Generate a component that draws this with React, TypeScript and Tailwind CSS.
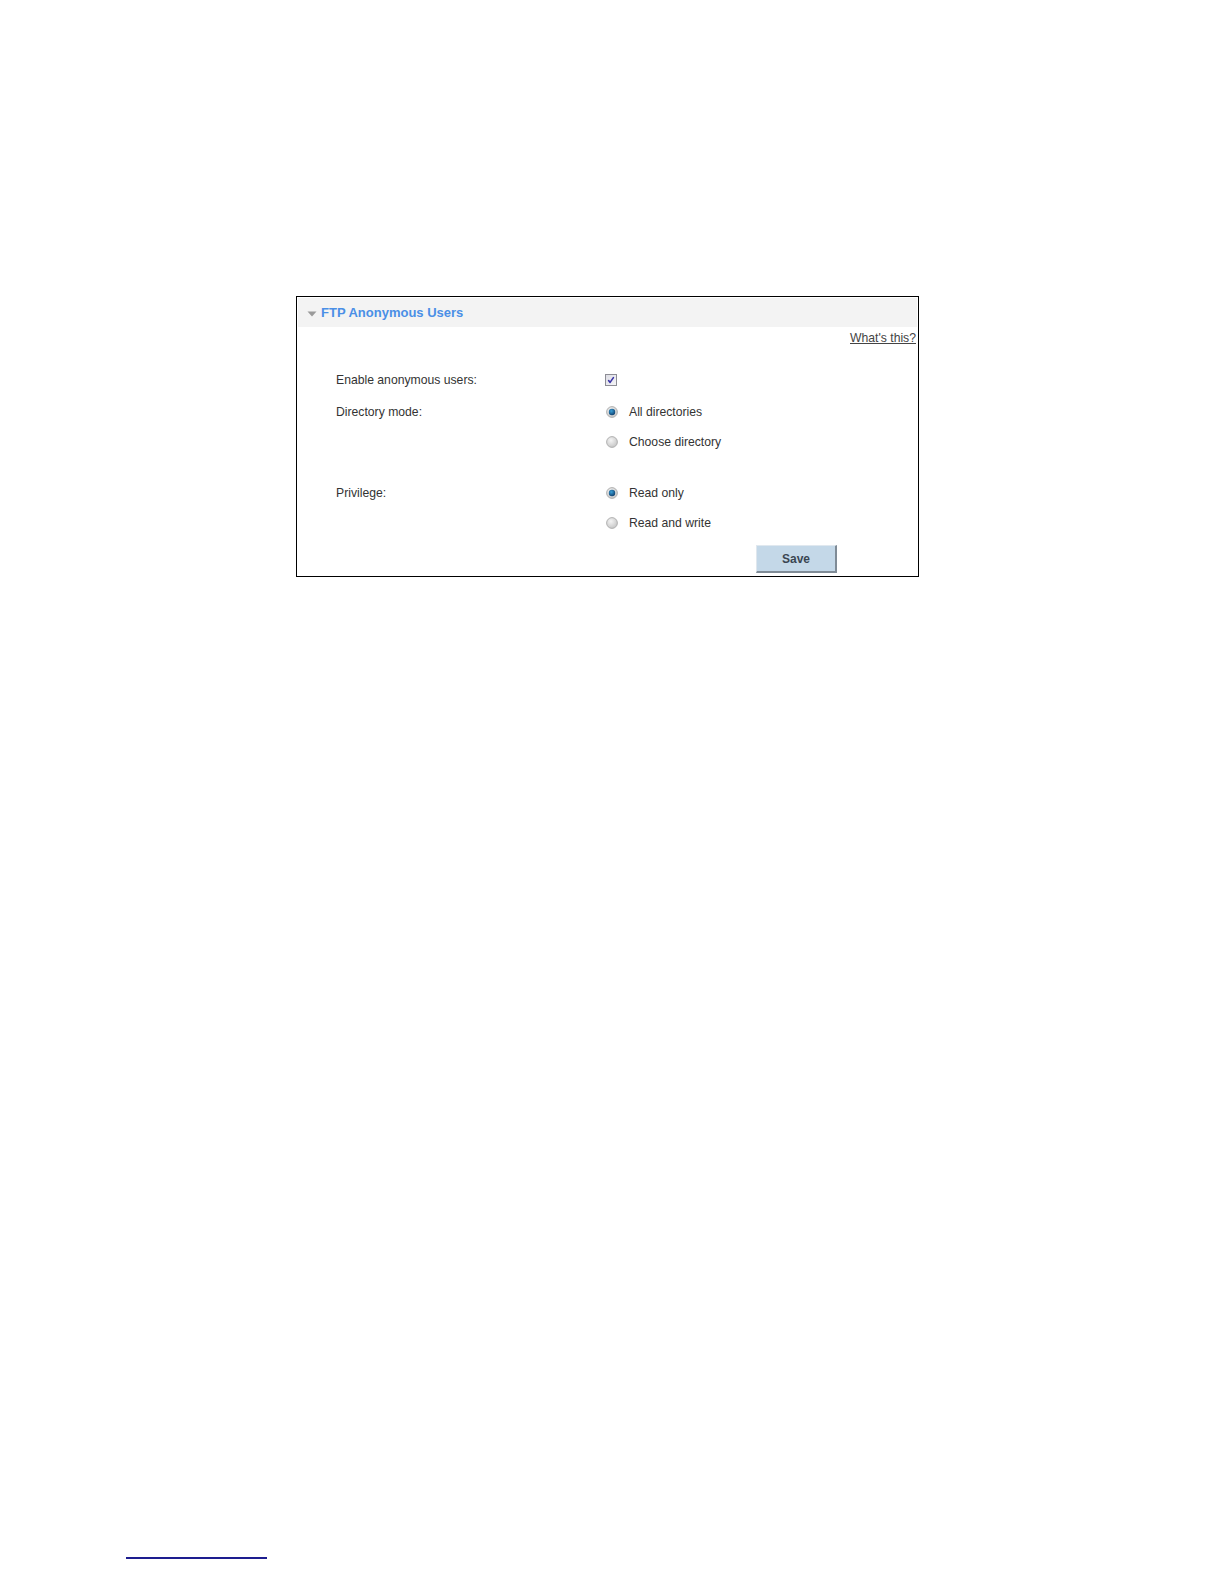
import React from "react";

function Radio({ checked }: { checked: boolean }) {
  return (
    <svg width="12" height="12" viewBox="0 0 12 12" className="shrink-0">
      <defs>
        <radialGradient id={checked ? "rg1" : "rg0"} cx="40%" cy="35%" r="70%">
          <stop offset="0%" stopColor="#f4f4f4" />
          <stop offset="100%" stopColor="#c4c4c4" />
        </radialGradient>
        <radialGradient id="dot" cx="40%" cy="35%" r="70%">
          <stop offset="0%" stopColor="#3aa0d8" />
          <stop offset="100%" stopColor="#0d3c6a" />
        </radialGradient>
      </defs>
      <circle cx="6" cy="6" r="5.4" fill={`url(#${checked ? "rg1" : "rg0"})`} stroke="#acacac" strokeWidth="0.9" />
      {checked && <circle cx="6" cy="6" r="3.2" fill="url(#dot)" />}
    </svg>
  );
}

function Checkbox() {
  return (
    <svg width="12" height="12" viewBox="0 0 12 12" className="shrink-0">
      <defs>
        <linearGradient id="cbg" x1="0" y1="0" x2="1" y2="1">
          <stop offset="0%" stopColor="#dcdce4" />
          <stop offset="100%" stopColor="#f6f6f8" />
        </linearGradient>
      </defs>
      <rect x="0.5" y="0.5" width="11" height="11" fill="url(#cbg)" stroke="#8d8d95" strokeWidth="1" />
      <path d="M3.6 6.6 L5.1 8.4 L8.4 3.6" fill="none" stroke="#3b35a8" strokeWidth="1.6" strokeLinecap="round" strokeLinejoin="round" />
    </svg>
  );
}

export default function App() {
  return (
    <div className="bg-white min-h-[1584px] pt-[296px] text-[12.2px] text-[#333333]" style={{ fontFamily: '"Liberation Sans", Arial, sans-serif' }}>
      <div className="ml-[296px] w-[623px] h-[281px] border border-black flex flex-col">
        <div className="mx-px mt-px h-[29px] bg-[#f3f3f3] flex items-center pl-[9px] gap-[4px]">
          <svg width="10" height="6" viewBox="0 0 10 6" className="mt-[2px]">
            <path d="M0.5 0.5 L9.5 0.5 L5 5.5 Z" fill="#9a9a9a" />
          </svg>
          <span className="font-bold text-[13px] text-[#4a8fe6]">FTP Anonymous Users</span>
        </div>
        <div className="mt-[4px] h-[14px] flex justify-end pr-[2px]">
          <span className="underline text-[#444444] leading-[14px]">What's this?</span>
        </div>
        <div className="pl-[39px] grid grid-cols-[265px_1fr]">
          <div className="mt-[20px] h-[30px] flex items-center">Enable anonymous users:</div>
          <div className="mt-[20px] h-[30px] flex items-center pl-[4px]">
            <Checkbox />
          </div>

          <div className="mt-[2px] h-[30px] flex items-center">Directory mode:</div>
          <div className="mt-[2px] h-[30px] flex items-center pl-[5px] gap-[11px]">
            <Radio checked />
            <span>All directories</span>
          </div>
          <div className="h-[30px]" />
          <div className="h-[30px] flex items-center pl-[5px] gap-[11px]">
            <Radio checked={false} />
            <span>Choose directory</span>
          </div>

          <div className="mt-[21px] h-[30px] flex items-center">Privilege:</div>
          <div className="mt-[21px] h-[30px] flex items-center pl-[5px] gap-[11px]">
            <Radio checked />
            <span>Read only</span>
          </div>
          <div className="h-[30px]" />
          <div className="h-[30px] flex items-center pl-[5px] gap-[11px]">
            <Radio checked={false} />
            <span>Read and write</span>
          </div>

          <div />
          <div className="mt-[7px] pl-[155px]">
            <button className="w-[81px] h-[28px] bg-[#c4d8e8] border border-t-[#e0e8ef] border-l-[#dfe7ee] border-r-[#7f8b96] border-b-[#7f8b96] border-r-2 border-b-2 font-bold text-[12px] text-[#3a4652]">
              Save
            </button>
          </div>
        </div>
      </div>
      <div className="mt-[980px] ml-[126px] w-[141px] h-[2px] bg-[#1d1d8f]" />
    </div>
  );
}
